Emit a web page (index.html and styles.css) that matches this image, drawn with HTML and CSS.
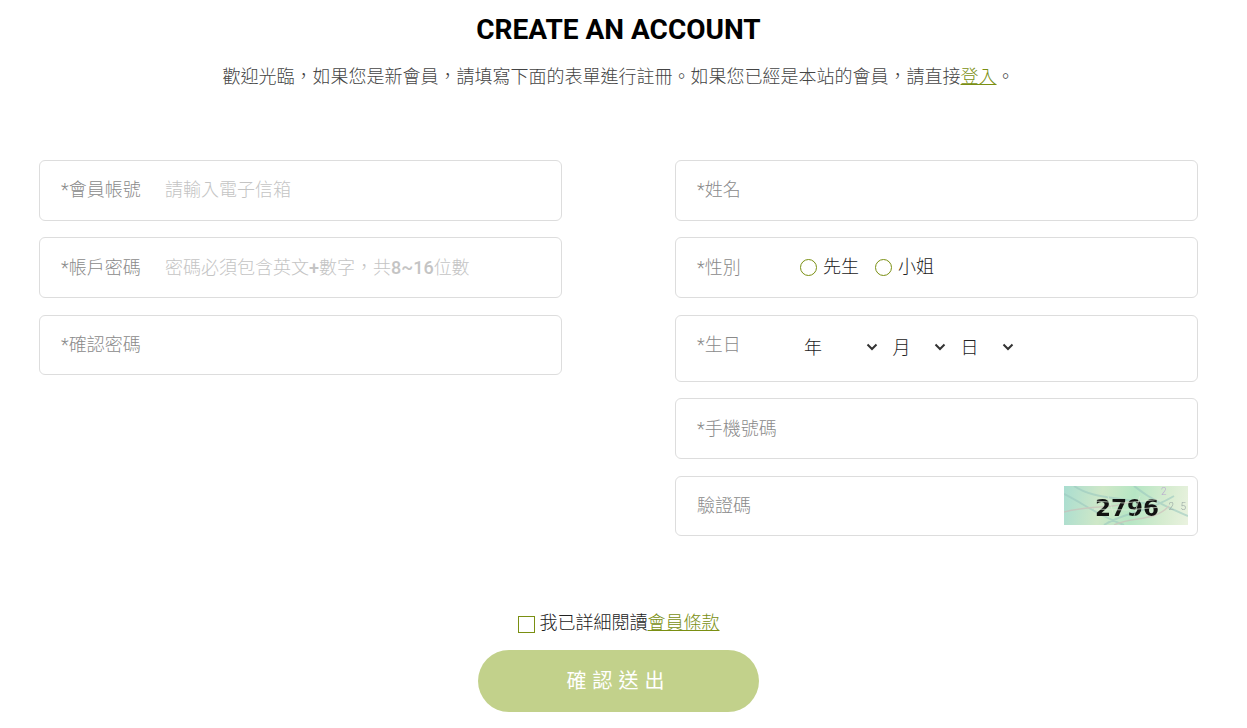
FILE: index.html
```html
<!DOCTYPE html>
<html lang="zh-Hant">
<head>
<meta charset="utf-8">
<title>Create an account</title>
<link rel="stylesheet" href="styles.css">
</head>
<body>
<main class="page">
  <h1 class="title">CREATE AN ACCOUNT</h1>
  <p class="intro">歡迎光臨&#65292;如果您是新會員&#65292;請填寫下面的表單進行註冊。如果您已經是本站的會員&#65292;請直接<a href="#">登入</a>。</p>
  <form class="form">
    <div class="columns">
      <div class="col">
        <div class="field"><span class="label">*會員帳號</span><span class="hint">請輸入電子信箱</span></div>
        <div class="field"><span class="label">*帳戶密碼</span><span class="hint">密碼必須包含英文<b class="hint-latin">+</b>數字&#65292;共<b class="hint-latin">8~16</b>位數</span></div>
        <div class="field"><span class="label">*確認密碼</span></div>
      </div>
      <div class="col">
        <div class="field"><span class="label">*姓名</span></div>
        <div class="field">
          <span class="label label-short">*性別</span>
          <span class="radio"></span><span class="choice">先生</span>
          <span class="radio radio-next"></span><span class="choice">小姐</span>
        </div>
        <div class="field field-birth">
          <span class="label label-short">*生日</span>
          <div class="selects">
            <span class="sel sel-y">年<svg class="chev" viewBox="0 0 12 8"><path d="M1.500 1.500L6 6l4.500-4.500"/></svg></span>
            <span class="sel sel-m">月<svg class="chev" viewBox="0 0 12 8"><path d="M1.500 1.500L6 6l4.500-4.500"/></svg></span>
            <span class="sel sel-d">日<svg class="chev" viewBox="0 0 12 8"><path d="M1.500 1.500L6 6l4.500-4.500"/></svg></span>
          </div>
        </div>
        <div class="field"><span class="label">*手機號碼</span></div>
        <div class="field field-captcha">
          <span class="label">驗證碼</span>
          <div class="captcha">
            <svg class="captcha-bg" viewBox="0 0 124 39" preserveAspectRatio="none">
              <path d="M0 8C20 18 35 30 60 39M10 0C30 14 60 10 90 20M40 39C60 26 80 28 110 10M70 0C90 16 110 24 124 30" fill="none" stroke="#9cc9c0" stroke-width="2"/>
              <path d="M0 26C30 18 50 24 70 14M50 39C70 30 90 36 105 20" fill="none" stroke="#cdb9b8" stroke-width="1.500"/>
            </svg>
            <span class="captcha-noise captcha-noise-a">2</span>
            <span class="captcha-noise captcha-noise-b">2 5</span>
            <span class="captcha-code">2796</span>
            <svg class="captcha-streak" viewBox="0 0 124 39" preserveAspectRatio="none">
              <path d="M30 15L60 17 98 13M30 23L62 24 98 21M44 10L50 30M76 10L70 30" fill="none" stroke="#d8ead6" stroke-width=".7"/>
            </svg>
          </div>
        </div>
      </div>
    </div>
    <div class="agree">
      <span class="box"></span><span>我已詳細閱讀<a href="#">會員條款</a></span>
    </div>
    <button class="submit" type="button">確認送出</button>
  </form>
</main>
</body>
</html>
```
FILE: styles.css
```css
* { box-sizing: border-box; }
html, body { margin: 0; padding: 0; background: #fff; }
body {
  font-family: Roboto, "Noto Sans CJK TC", sans-serif;
  color: #333;
  height: 728px;
  overflow: hidden;
}
.page { padding: 11px 49px 0 39px; }
.title {
  margin: 0;
  text-align: center;
  font-size: 28px;
  line-height: 37px;
  font-weight: 700;
  color: #000;
}
.intro {
  margin: 14px 0 0;
  text-align: center;
  font-size: 18px;
  line-height: 30px;
  font-weight: 300;
  color: #444;
}
.intro a, .agree a { color: #7a8f12; text-decoration: underline; }
.form { margin-top: 68px; }
.columns { display: flex; justify-content: space-between; align-items: flex-start; }
.col { width: 523px; display: flex; flex-direction: column; gap: 16.75px; }
.field {
  height: 60.500px;
  border: 1px solid #ddd;
  border-radius: 6px;
  padding: 0 21px;
  display: flex;
  align-items: center;
  font-size: 18px;
  font-weight: 300;
}
.label { color: #8a8a8a; width: 104px; flex: none; position: relative; top: -2px; }
.label-short { width: 82px; }
.hint { color: #c4c4c4; position: relative; top: -2px; }
.hint-latin { font-weight: 500; }
.radio {
  width: 17px; height: 17px;
  border: 1px solid #7a8f12;
  border-radius: 50%;
  flex: none;
  margin: 0 6px 0 21px;
}
.radio-next { margin-left: 16px; }
.choice { color: #222; position: relative; top: -3px; }
.field-birth { height: 67px; align-items: flex-start; padding-top: 14px; }
.field-birth .label { top: 0; }
.selects { display: flex; gap: 14.5px; margin: 3px 0 0 25px; color: #222; }
.sel { display: flex; align-items: center; justify-content: space-between; }
.sel-y { width: 74px; }
.sel-m { width: 53.500px; }
.sel-d { width: 53px; }
.chev { width: 12px; height: 8px; fill: none; stroke: #333; stroke-width: 2; flex: none; margin-top: 2px; }
.field-captcha { padding-right: 9px; justify-content: space-between; }
.captcha {
  width: 124px; height: 39px;
  position: relative;
  overflow: hidden;
  filter: blur(.6px);
  background: linear-gradient(100deg, #a9ddd0 0%, #cfe8c8 30%, #b6e6c4 55%, #d6ecd0 80%, #eaf2df 100%);
}
.captcha-bg { width: 100%; height: 100%; display: block; opacity: .6; }
.captcha-streak { position: absolute; inset: 0; width: 100%; height: 100%; }
.captcha-code {
  position: absolute; left: 31px; top: 8px;
  font-family: "DejaVu Sans", sans-serif;
  font-weight: 700; font-size: 23px; line-height: 28px;
  color: #111;
}
.captcha-noise { position: absolute; font-size: 10px; line-height: 12px; }
.captcha-noise-a { left: 97px; top: 0; color: #b9a6cf; }
.captcha-noise-b { right: 2px; top: 15px; color: #9aa8a4; word-spacing: 4px; }
.agree {
  margin-top: 74px;
  display: flex;
  justify-content: center;
  align-items: center;
  font-size: 18px;
  line-height: 26px;
  font-weight: 300;
  color: #222;
  gap: 5px;
}
.box { width: 17px; height: 17px; border: 1px solid #7a8f12; margin-top: 3px; }
.submit {
  display: block;
  width: 281px; height: 62px;
  margin: 14px auto 0;
  border: 0;
  border-radius: 31px;
  background: #c2d18b;
  color: #fff;
  font: 400 20px/62px Roboto, "Noto Sans CJK TC", sans-serif;
  letter-spacing: 6px;
  padding: 0;
}
```
